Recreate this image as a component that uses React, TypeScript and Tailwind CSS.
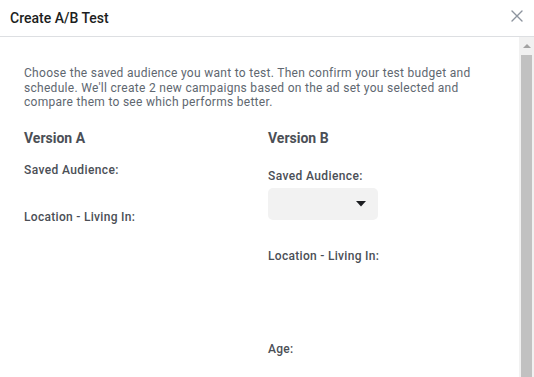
import React from "react";

export default function App() {
  return (
    <div
      className="w-[534px] h-[377px] bg-white flex flex-col overflow-hidden"
      style={{ fontFamily: "Roboto, 'Liberation Sans', Arial, sans-serif" }}
    >
      {/* Header */}
      <div className="h-[37px] shrink-0 border-b border-[#dddfe2] flex items-center justify-between pl-[10px] pr-[11px]">
        <div className="text-[14px] leading-[16px] font-medium text-[#1c1e21] -mt-[1px]">Create A/B Test</div>
        <svg width="12" height="12" viewBox="0 0 12 12" className="-mt-[5px]">
          <path d="M1 1 L11 11 M11 1 L1 11" stroke="#8d949e" strokeWidth="1.4" strokeLinecap="round" />
        </svg>
      </div>

      {/* Body */}
      <div className="flex flex-1 min-h-0">
        <div className="flex-1 pl-[24px] pr-[24px] pt-[29px] overflow-hidden">
          <p className="text-[12px] leading-[14.5px] tracking-[0.29px] text-[#606770]">
            Choose the saved audience you want to test. Then confirm your test budget and schedule. We'll create 2 new
            campaigns based on the ad set you selected and compare them to see which performs better.
          </p>
          <div className="flex mt-[20px]">
            <div className="w-[244px] flex flex-col">
              <div className="text-[14px] leading-[16px] font-bold text-[#4b4f56]">Version A</div>
              <div className="mt-[16px] text-[12px] leading-[16px] tracking-[0.38px] font-medium text-[#4b4f56]">Saved Audience:</div>
              <div className="mt-[31px] text-[12px] leading-[16px] tracking-[0.3px] font-medium text-[#4b4f56]">Location - Living In:</div>
            </div>
            <div className="flex-1 flex flex-col">
              <div className="text-[14px] leading-[16px] font-bold text-[#4b4f56]">Version B</div>
              <div className="mt-[22px] text-[12px] leading-[16px] tracking-[0.38px] font-medium text-[#4b4f56]">Saved Audience:</div>
              <div className="mt-[4px] w-[110px] h-[32px] rounded-[5px] bg-[#f2f2f2] flex items-center justify-end pr-[12px]">
                <svg width="10" height="6" viewBox="0 0 10 6">
                  <path d="M0 0 L10 0 L5 5.5 Z" fill="#1c1e21" />
                </svg>
              </div>
              <div className="mt-[28px] text-[12px] leading-[16px] tracking-[0.3px] font-medium text-[#4b4f56]">Location - Living In:</div>
              <div className="mt-[77px] text-[12px] leading-[16px] tracking-[0.3px] font-medium text-[#4b4f56]">Age:</div>
            </div>
          </div>
        </div>

        {/* Scrollbar */}
        <div className="w-[15px] shrink-0 bg-[#f1f1f1] flex flex-col">
          <div className="h-[18px] flex items-center justify-center">
            <svg width="8" height="4" viewBox="0 0 8 4">
              <path d="M0 4 L4 0 L8 4 Z" fill="#a3a3a3" />
            </svg>
          </div>
          <div className="flex-1 mx-[2px] bg-[#c1c1c1]" />
        </div>
      </div>
    </div>
  );
}
